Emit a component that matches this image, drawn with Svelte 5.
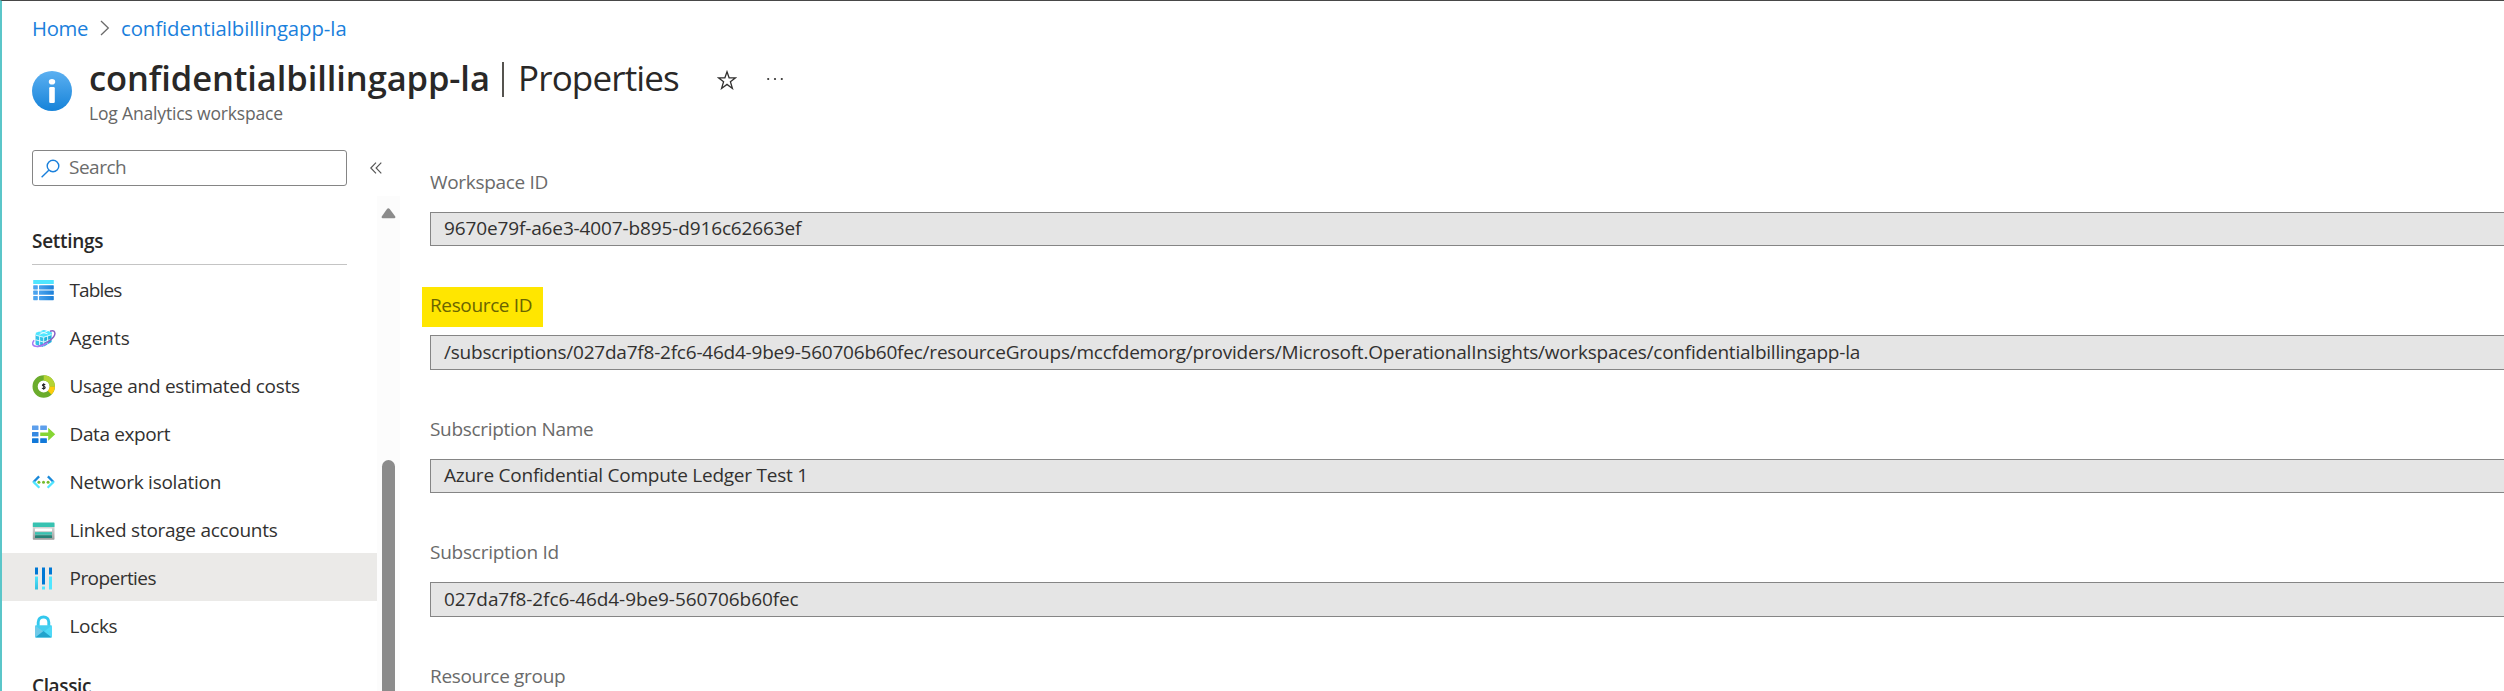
<script>
  const menu = [
    { id: 'tables', label: 'Tables', track: -0.85, drop: 0.4 },
    { id: 'agents', label: 'Agents', track: -0.05, drop: 1.5 },
    { id: 'costs', label: 'Usage and estimated costs', track: -0.27, drop: 1.3 },
    { id: 'export', label: 'Data export', track: -0.38, drop: 2.5 },
    { id: 'network', label: 'Network isolation', track: -0.25, drop: 2 },
    { id: 'storage', label: 'Linked storage accounts', track: -0.28, drop: 3.3 },
    { id: 'properties', label: 'Properties', track: -0.55, drop: 0.5, selected: true },
    { id: 'locks', label: 'Locks', track: -0.35, drop: 1.5 }
  ];

  const fields = [
    { label: 'Workspace ID', labelTrack: -0.31, value: '9670e79f-a6e3-4007-b895-d916c62663ef', track: -0.13 },
    {
      label: 'Resource ID',
      labelTrack: -0.361,
      marked: true,
      value:
        '/subscriptions/027da7f8-2fc6-46d4-9be9-560706b60fec/resourceGroups/mccfdemorg/providers/Microsoft.OperationalInsights/workspaces/confidentialbillingapp-la',
      track: -0.22
    },
    { label: 'Subscription Name', labelTrack: -0.317, value: 'Azure Confidential Compute Ledger Test 1', track: -0.235 },
    { label: 'Subscription Id', labelTrack: -0.24, value: '027da7f8-2fc6-46d4-9be9-560706b60fec', track: -0.08 },
    { label: 'Resource group', labelTrack: -0.321 }
  ];
</script>

<div class="blade">
  <nav class="crumbs">
    <a class="home" href="#home">Home</a>
    <svg class="sep" width="10" height="18" viewBox="0 0 10 18" fill="none" stroke="#6b6b6b" stroke-width="1.3"><path d="M1 2l7.3 7L1 16" /></svg>
    <a class="here" href="#workspace">confidentialbillingapp-la</a>
  </nav>

  <header>
    <svg class="info" width="40" height="40" viewBox="0 0 40 40">
      <defs>
        <linearGradient id="infoFill" x1="0" y1="0" x2="0" y2="1"><stop offset="0" stop-color="#5cb0f1" /><stop offset="1" stop-color="#1683d9" /></linearGradient>
      </defs>
      <circle cx="20" cy="20" r="20" fill="url(#infoFill)" />
      <ellipse cx="20" cy="10.8" rx="3.2" ry="2.8" fill="#fff" />
      <rect x="17.2" y="16" width="5.6" height="16" rx="1.3" fill="#fff" />
    </svg>
    <div class="heading">
      <div class="title">
        <h1><b>confidentialbillingapp-la</b><i></i><span>Properties</span></h1>
        <svg class="star" width="20" height="20" viewBox="0 0 20 20" fill="none" stroke="#323130" stroke-width="1.3"><path d="M10 1.8l2.1 6h6.5l-5.2 4 2 6.6L10 14.4l-5.4 4 2-6.6-5.2-4h6.5z" /></svg>
        <svg class="dots" width="18" height="4" viewBox="0 0 18 4" fill="#323130"><circle cx="2.2" cy="2" r="1.1" /><circle cx="9" cy="2" r="1.1" /><circle cx="15.8" cy="2" r="1.1" /></svg>
      </div>
      <p>Log Analytics workspace</p>
    </div>
  </header>

  <div class="body">
    <aside>
      <div class="tools">
        <div class="search">
          <svg width="19" height="19" viewBox="0 0 19 19" fill="none" stroke="#1a80dc" stroke-width="1.4"><circle cx="12" cy="7" r="5.8" /><path d="M7.8 11.2L.6 18.3" /></svg>
          <span>Search</span>
        </div>
        <svg class="collapse" width="12" height="12" viewBox="0 0 12 12" fill="none" stroke="#555" stroke-width="1.15"><path d="M6 .6L.8 6 6 11.4M11.3.6L6.1 6l5.2 5.4" /></svg>
      </div>

      <div class="panel">
        <div class="list">
          <h2 class="settings">Settings</h2>
          <ul>
            {#each menu as item (item.id)}
              <li class:selected={item.selected}>
                <svg class="icon" width="24" height="24" viewBox="0 {-item.drop} 24 24">
                  {#if item.id === 'tables'}
                    <defs><linearGradient id="cell" x1="0" x2="1"><stop offset="0" stop-color="#4ba3ee" /><stop offset="1" stop-color="#1c80d8" /></linearGradient></defs>
                    <rect x="1.2" y="1.6" width="20.6" height="4" rx=".5" fill="#50e6ff" />
                    {#each [6.8, 12.2, 17.6] as y}
                      <rect x="1.2" {y} width="4.6" height="4.2" rx=".6" fill="#4ba3ee" />
                      <rect x="7" {y} width="14.8" height="4.2" rx=".6" fill="url(#cell)" />
                    {/each}
                  {:else if item.id === 'agents'}
                    <path d="M11.6 3l8 2v9.5l-8.3 5-7.6-2.6V7z" fill="#1fb2dc" />
                    <path d="M11.6 2.4l7.8 2.2v2.7l-7.6 2.6-8-2V5.2z" fill="#50e6ff" />
                    <path d="M11.7 9.7v9.5l-7.9-2.6V7.7z" fill="#32c3e8" />
                    <path d="M3.7 7.7l8 2.1 7.7-2.6M3.7 12.3l8 2.3 7.7-3M11.7 9.8v9.6M7.6 8.7v9.4M15.6 8.5V17M7.5 4l8 2.3M15.6 3.6L7.6 6.8" fill="none" stroke="#eefcff" stroke-width=".9" />
                    <path d="M5.5 18.9C13 17.8 24.5 9.5 22.7 4.8 22.2 3.3 20.4 3 18 3.7" fill="none" stroke="#8661c5" stroke-width="1.5" />
                    <path d="M2.2 12.8C-.6 16 .4 19 5.5 18.9c3.2-.1 7-1.7 10-3.6" fill="none" stroke="#a67af4" stroke-width="1.5" />
                  {:else if item.id === 'costs'}
                    <g fill="none" stroke-width="5.2">
                      <circle cx="11.7" cy="11.2" r="8.6" stroke="#6bac2c" />
                      <path d="M11.7 2.6a8.6 8.6 0 0 1 8.6 8.6" stroke="#b4d334" />
                      <path d="M20.3 11.2a8.6 8.6 0 0 1-2.7 6.2" stroke="#fdcc0d" />
                    </g>
                    <path d="M13.2 9.7q-.4-.7-1.5-.7-1.3 0-1.3 1c0 1.2 2.8.8 2.8 2.2 0 .9-.6 1.2-1.5 1.2s-1.4-.3-1.6-.9M11.7 8v6.5" fill="none" stroke="#222" stroke-width="1.1" />
                  {:else if item.id === 'export'}
                    <rect y=".9" width="6.5" height="4.7" rx=".5" fill="#5d9fec" /><rect x="8.2" y=".9" width="6.7" height="4.7" rx=".5" fill="#5d9fec" />
                    <rect y="7.4" width="6.5" height="4.7" rx=".5" fill="#3689e2" />
                    <rect y="13.7" width="6.5" height="4.9" rx=".5" fill="#1279d9" /><rect x="8.2" y="13.7" width="6.7" height="4.9" rx=".5" fill="#1279d9" />
                    <path d="M8.2 8h8V3.3l7 6.4-7 6.5v-4.6h-8z" fill="#86d633" />
                  {:else if item.id === 'network'}
                    <g fill="none" stroke-width="2.3">
                      <path d="M7.1 4.4L1.3 10.2" stroke="#1988d9" /><path d="M1.2 9.6l6.2 6.1" stroke="#50e6ff" />
                      <path d="M15.9 4.4l5.8 5.8" stroke="#1988d9" /><path d="M21.8 9.6l-6.2 6.1" stroke="#50e6ff" />
                    </g>
                    <g fill="#76bc2d"><circle cx="6.9" cy="10.2" r="1.5" /><circle cx="11.5" cy="10.2" r="1.5" /><circle cx="16.1" cy="10.2" r="1.5" /></g>
                  {:else if item.id === 'storage'}
                    <defs><linearGradient id="tray" x1="0" y1="0" x2="0" y2="1"><stop offset="0" stop-color="#e8e8e8" /><stop offset="1" stop-color="#9b9b9b" /></linearGradient></defs>
                    <rect x=".8" y="2" width="21.7" height="16.5" rx=".7" fill="url(#tray)" />
                    <rect x=".8" y="1.2" width="21.7" height="4.6" rx=".5" fill="#37c2b1" />
                    <rect x="3" y="7.2" width="17" height="2.8" rx=".5" fill="#fff" />
                    <rect x="3" y="10.9" width="17" height="2.5" fill="#37c2b1" />
                    <rect x="3" y="14" width="17" height="2.8" rx=".5" fill="#258277" />
                  {:else if item.id === 'properties'}
                    <defs><linearGradient id="slot" x1="0" y1="1" x2="0" y2="0"><stop offset="0" stop-color="#32bedd" /><stop offset="1" stop-color="#50e6ff" /></linearGradient></defs>
                    <rect x="3" y="1" width="3" height="7" fill="#0078d4" /><rect x="3" y="10" width="3" height="13" fill="url(#slot)" />
                    <rect x="10" y="1" width="3" height="17" fill="#0078d4" /><rect x="10" y="20" width="3" height="3" fill="#50e6ff" />
                    <rect x="17" y="1" width="3" height="7" fill="#0078d4" /><rect x="17" y="10" width="3" height="13" fill="#50e6ff" />
                  {:else}
                    <path d="M6.2 10.5V6.8C6.2 3.4 8.5 1.5 11.5 1.5s5.3 1.9 5.3 5.3v3.7" fill="none" stroke="#33c8ee" stroke-width="2.9" />
                    <rect x="3" y="10" width="17" height="12" rx=".8" fill="#4fd9f7" />
                    <path d="M3.2 10h16.6l-8.3 6.5z" fill="#45cdee" />
                    <path d="M3 10.5v11L11.5 16z" fill="#6fc9e8" />
                    <path d="M3.3 22h16.4l-8.2-6.5z" fill="#22a3cc" />
                  {/if}
                </svg>
                <span style:letter-spacing="{item.track}px">{item.label}</span>
              </li>
            {/each}
          </ul>
          <h2 class="classic">Classic</h2>
        </div>
        <div class="scroll">
          <svg width="15" height="11" viewBox="0 0 15 11" fill="#8b8b8b"><path d="M6 .9Q7.3-.4 8.7.9l5.4 7.3Q15 10 13.2 10.3H1.8Q0 10 .9 8.2z" /></svg>
          <div class="thumb"></div>
        </div>
      </div>
    </aside>

    <main>
      {#each fields as f}
        <section>
          <div class="label"><span class:marked={f.marked} style:letter-spacing="{f.labelTrack}px">{f.label}</span></div>
          {#if f.value}
            <div class="value"><span style:letter-spacing="{f.track}px">{f.value}</span></div>
          {/if}
        </section>
      {/each}
    </main>
  </div>
</div>

<style>
  :global(body) { overflow: hidden; background: #fff; }
  * { box-sizing: border-box; }
  .blade {
    height: 691px; overflow: hidden; display: flex; flex-direction: column;
    border-left: 2px solid #5bc6c9; border-top: 1px solid #474747;
    font: 19px/24px "Open Sans", "Noto Sans", sans-serif; color: #323130;
    font-variant-ligatures: none; white-space: nowrap;
  }
  .crumbs { display: flex; align-items: center; height: 54px; padding-left: 30px; font-size: 20.3px; }
  .crumbs a { color: #1a80dc; text-decoration: none; }
  .home { width: 67.5px; letter-spacing: -.3px; }
  .sep { margin-right: 11.5px; }
  .here { letter-spacing: -.04px; }
  header { display: flex; height: 95px; padding-left: 30px; }
  .info { margin-top: 16px; flex: none; }
  .heading { padding-left: 17px; }
  .title { display: flex; align-items: center; height: 46px; }
  h1 { display: flex; align-items: center; margin: 0; font: 400 35px/46px "Open Sans", "Noto Sans", sans-serif; color: #292827; }
  h1 b { font-size: 34.5px; font-weight: 600; letter-spacing: -.09px; width: 413px; }
  h1 i { width: 2px; height: 35px; background: #55534f; margin: 2px 14px 0 0; }
  h1 span { letter-spacing: -.85px; width: 198px; }
  .star { margin: 3px 29px 0 1px; }
  .dots { margin-top: 2px; }
  p { margin: 0; font-size: 17.5px; line-height: 24px; letter-spacing: -.165px; color: #666; }
  .body { display: flex; flex: 1; min-height: 0; }
  aside { width: 398px; flex: none; display: flex; flex-direction: column; }
  .tools { display: flex; align-items: center; height: 36px; padding-left: 30px; flex: none; }
  .search { display: flex; align-items: center; width: 315px; height: 36px; border: 1px solid #858585; border-radius: 3px; padding-left: 8px; }
  .search span { margin-left: 9px; letter-spacing: -.5px; color: #6b6b6b; padding-bottom: 2px; }
  .collapse { margin-left: 23px; }
  .panel { display: flex; margin-top: 10px; flex: 1; min-height: 0; }
  .list { width: 375px; flex: none; }
  h2 { margin: 0 0 0 30px; font-size: 19px; font-weight: 600; line-height: 26px; color: #292827; }
  .settings { width: 315px; height: 69px; padding-top: 32px; letter-spacing: -.3px; border-bottom: 1px solid #c4c4c4; }
  .classic { margin-top: 24px; letter-spacing: -.36px; }
  ul { list-style: none; margin: 0; padding: 0; }
  li { display: flex; align-items: center; height: 48px; padding-left: 30px; }
  li span { margin-left: 13.5px; padding-top: 2px; }
  .icon { margin-top: 1px; flex: none; }
  .selected { background: #ebeae8; }
  .scroll { width: 23px; background: #fcfcfc; padding: 12px 0 0 4px; display: flex; flex-direction: column; }
  .scroll svg { flex: none; }
  .thumb { width: 13px; flex: 1; margin: 241px 0 0 1px; border-radius: 7px 7px 0 0; background: #8b8b8b; }
  main { flex: 1; min-width: 0; padding: 19px 0 0 30px; }
  section { height: 123.4px; }
  .label { height: 43px; line-height: 26px; color: #6a6a6a; }
  .marked { display: inline-block; margin: -5px 0 0 -8.5px; padding: 5px 11px 9px 8.5px; width: 121px; height: 40px; background: #ffe600; color: #6a6500; }
  .value { height: 34px; border: 1px solid #858585; border-right: 0; background: #e5e5e5; padding-left: 13px; line-height: 30px; color: #323130; }
  section:nth-child(even) .value { height: 35px; line-height: 32px; }
</style>
